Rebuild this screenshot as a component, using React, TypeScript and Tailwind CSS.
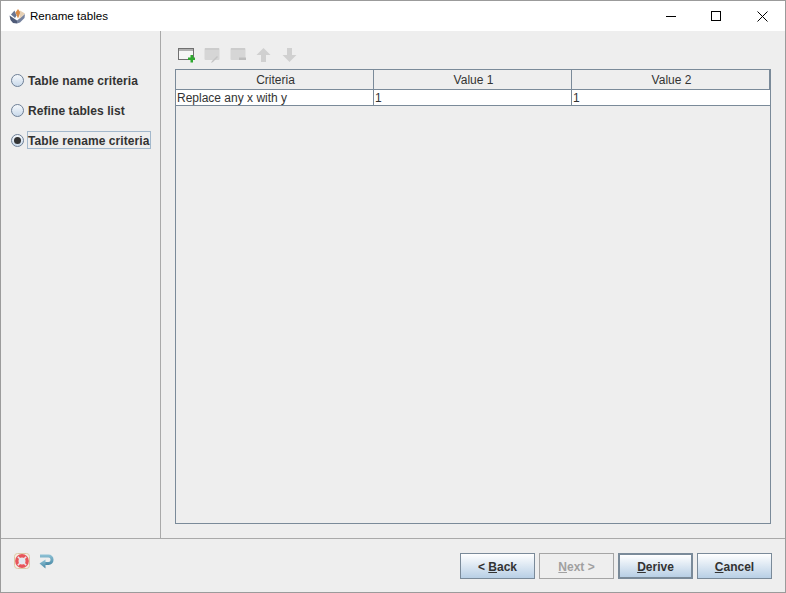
import React from "react";

const Radio = ({ label, checked, focused }: { label: string; checked?: boolean; focused?: boolean }) => (
  <div className="flex h-[20px] items-center">
    <span className="relative ml-[10px] h-[13px] w-[13px] shrink-0 rounded-full border border-[#6d7f96] bg-gradient-to-b from-[#f6f9fc] to-[#c9d9ea]">
      {checked && <span className="absolute left-[2px] top-[2px] h-[7px] w-[7px] rounded-full bg-[#333333]" />}
    </span>
    <span
      className={`ml-[3px] flex h-[18px] items-center whitespace-nowrap pr-[1px] pt-px text-[12px] font-bold tracking-[0.08px] text-[#333333] ${
        focused ? "w-[124px] border border-[#a3b8cc]" : "border border-transparent"
      }`}
    >
      {label}
    </span>
  </div>
);

const Btn = ({
  children,
  disabled,
  def,
}: {
  children: React.ReactNode;
  disabled?: boolean;
  def?: boolean;
}) => (
  <div
    className={`flex h-[26px] w-[75px] items-center justify-center pt-px text-[12px] font-bold ${
      disabled
        ? "border border-[#a5a5a5] bg-[#eeeeee] text-[#a0a0a0]"
        : def
          ? "border-2 border-[#7a8a99] bg-gradient-to-b from-[#ffffff] to-[#b8cfe5] text-[#333333]"
          : "border border-[#7a8a99] bg-gradient-to-b from-[#ffffff] to-[#b8cfe5] text-[#333333]"
    }`}
  >
    {children}
  </div>
);

const Logo = () => (
  <svg width="17" height="17" viewBox="0 0 17 17">
    <path d="M0.5 7.500 L8 12.500 L8 15.500 L4 15 L1.500 12Z" fill="#4f5b78" />
    <path d="M8 12.500 L16 6 L15.500 10 L11 14.500 L8 15.500Z" fill="#76829e" />
    <path d="M2 6.500 L5.500 2.500 L7.500 7.500 L6 10Z" fill="#6a7692" />
    <path d="M9 1 L11.500 4.500 L9 10.500 L6.500 4.500Z" fill="#d98a45" />
    <path d="M11 2.500 L16 5.500 L10.500 11Z" fill="#e6d0b4" />
  </svg>
);

const AddIcon = () => (
  <svg width="17" height="17" viewBox="0 0 17 17">
    <rect x="0.5" y="1.5" width="15" height="11" fill="#f6f6f6" stroke="#707070" />
    <rect x="1" y="2" width="14" height="2" fill="#b0b0b0" />
    <path d="M10 10.500h2.500V8h2.500v2.500h2v2.500h-2v2.500h-2.500V13H10Z" fill="#2fa82f" />
  </svg>
);

const EditIcon = () => (
  <svg width="17" height="17" viewBox="0 0 17 17">
    <rect x="0.5" y="1" width="15" height="12" rx="1" fill="#d6d6d6" />
    <rect x="1" y="1" width="14" height="2" fill="#cccccc" />
    <path d="M7 16 L8 14 L13 9 L14 10 L9 15Z" fill="#c4c4c4" />
  </svg>
);

const RemoveIcon = () => (
  <svg width="17" height="17" viewBox="0 0 17 17">
    <rect x="0.5" y="1" width="15" height="12" rx="1" fill="#d6d6d6" />
    <rect x="1" y="1" width="14" height="2" fill="#cccccc" />
    <rect x="9" y="10.500" width="7" height="2.500" fill="#bdbdbd" />
  </svg>
);

const ArrowIcon = ({ down }: { down?: boolean }) => (
  <svg width="17" height="17" viewBox="0 0 17 17">
    <path
      d={down ? "M5 1h5v7h4.500L7.500 15 .5 8H5Z" : "M7.500 1 14.500 8H10v7H5V8H.5Z"}
      fill="#d0d0d0"
    />
  </svg>
);

const Lifebuoy = () => (
  <svg width="16" height="16" viewBox="0 0 16 16">
    <rect x="0.5" y="0.5" width="15" height="15" rx="3" fill="#f4efe6" stroke="#dcc9a4" />
    <circle cx="8" cy="8" r="5.200" fill="none" stroke="#e8555a" strokeWidth="3.400" />
    <path d="M3.800 3.800 5.800 5.800M12.200 3.800 10.200 5.800M3.800 12.200 5.800 10.200M12.200 12.200 10.200 10.200" stroke="#e6e8ee" strokeWidth="1.600" />
    <circle cx="8" cy="8" r="3" fill="#e3e8f0" />
  </svg>
);

const BackArrow = () => (
  <svg width="15" height="15" viewBox="0 0 15 15">
    <defs>
      <linearGradient id="ba" x1="0" y1="0" x2="0" y2="1">
        <stop offset="0" stopColor="#8fc2d6" />
        <stop offset="1" stopColor="#4a8aa6" />
      </linearGradient>
    </defs>
    <path
      d="M1 0.5h8.500a5 5 0 0 1 5 5v0.5a5 5 0 0 1-5 5H6V8h3.500a2 2 0 0 0 2-2V5.500a2 2 0 0 0-2-2H1Z"
      fill="url(#ba)"
    />
    <path d="M6.500 5.500v9L0.500 9.500Z" fill="url(#ba)" />
  </svg>
);

export default function App() {
  return (
    <div
      className="flex h-[593px] w-[786px] flex-col overflow-hidden border border-[#9b9b9b] bg-[#eeeeee] text-[#333333]"
      style={{ fontFamily: '"Liberation Sans", Arial, sans-serif' }}
    >
      <div className="flex h-[30px] shrink-0 items-center bg-white">
        <div className="ml-[8px] flex">
          <Logo />
        </div>
        <span className="ml-[4px] text-[11.6px] text-black">Rename tables</span>
        <div className="ml-auto flex items-center">
          <div className="flex h-[30px] w-[46px] items-center justify-center pl-[2px]">
            <div className="h-px w-[10px] bg-black" />
          </div>
          <div className="flex h-[30px] w-[46px] items-center justify-center">
            <div className="h-[10px] w-[10px] border border-black" />
          </div>
          <div className="flex h-[30px] w-[46px] items-center justify-center">
            <svg width="11" height="11" viewBox="0 0 11 11">
              <path d="M.5.5l10 10M10.500.5l-10 10" stroke="#000" strokeWidth="1" fill="none" />
            </svg>
          </div>
        </div>
      </div>

      <div className="flex min-h-0 flex-1">
        <div className="flex w-[159px] shrink-0 flex-col gap-[10px] pt-[39px]">
          <Radio label="Table name criteria" />
          <Radio label="Refine tables list" />
          <Radio label="Table rename criteria" checked focused />
        </div>
        <div className="w-px shrink-0 bg-[#a9a9a9]" />
        <div className="flex min-w-0 flex-1 flex-col pl-[14px] pr-[14px]">
          <div className="flex h-[38px] shrink-0 items-start gap-[9px] pl-[3px] pt-[16px]">
            <AddIcon />
            <EditIcon />
            <RemoveIcon />
            <ArrowIcon />
            <ArrowIcon down />
          </div>
          <div className="mb-[14px] flex min-h-0 flex-1 flex-col border border-[#7a8a99]">
            <div className="grid h-[20px] shrink-0 grid-cols-[198px_198px_1fr] border-b border-[#7a8a99] text-[12px] leading-[19px]">
              <div className="flex items-center justify-center border-r border-[#7a8a99] pl-[2px] pt-px">Criteria</div>
              <div className="flex items-center justify-center border-r border-[#7a8a99] pl-[2px] pt-px">Value 1</div>
              <div className="flex items-center justify-center border-r border-[#7a8a99] pl-[2px] pt-px">Value 2</div>
            </div>
            <div className="grid h-[16px] shrink-0 grid-cols-[198px_198px_1fr] border-b border-[#7a8a99] bg-white text-[12px] leading-[15px]">
              <div className="flex items-center border-r border-[#7a8a99] pl-px pt-px">Replace any x with y</div>
              <div className="flex items-center border-r border-[#7a8a99] pl-px pt-px">1</div>
              <div className="flex items-center pl-px pt-px">1</div>
            </div>
          </div>
        </div>
      </div>

      <div className="flex h-[54px] shrink-0 items-start border-t border-[#a9a9a9]">
        <div className="ml-[13px] mt-[14px] flex items-center gap-[9px]">
          <Lifebuoy />
          <BackArrow />
        </div>
        <div className="ml-auto mr-[13px] mt-[14px] flex gap-[4px]">
          <Btn>
            <span>
              &lt; <span className="underline">B</span>ack
            </span>
          </Btn>
          <Btn disabled>
            <span>
              <span className="underline">N</span>ext &gt;
            </span>
          </Btn>
          <Btn def>
            <span>
              <span className="underline">D</span>erive
            </span>
          </Btn>
          <Btn>
            <span>
              <span className="underline">C</span>ancel
            </span>
          </Btn>
        </div>
      </div>
    </div>
  );
}
